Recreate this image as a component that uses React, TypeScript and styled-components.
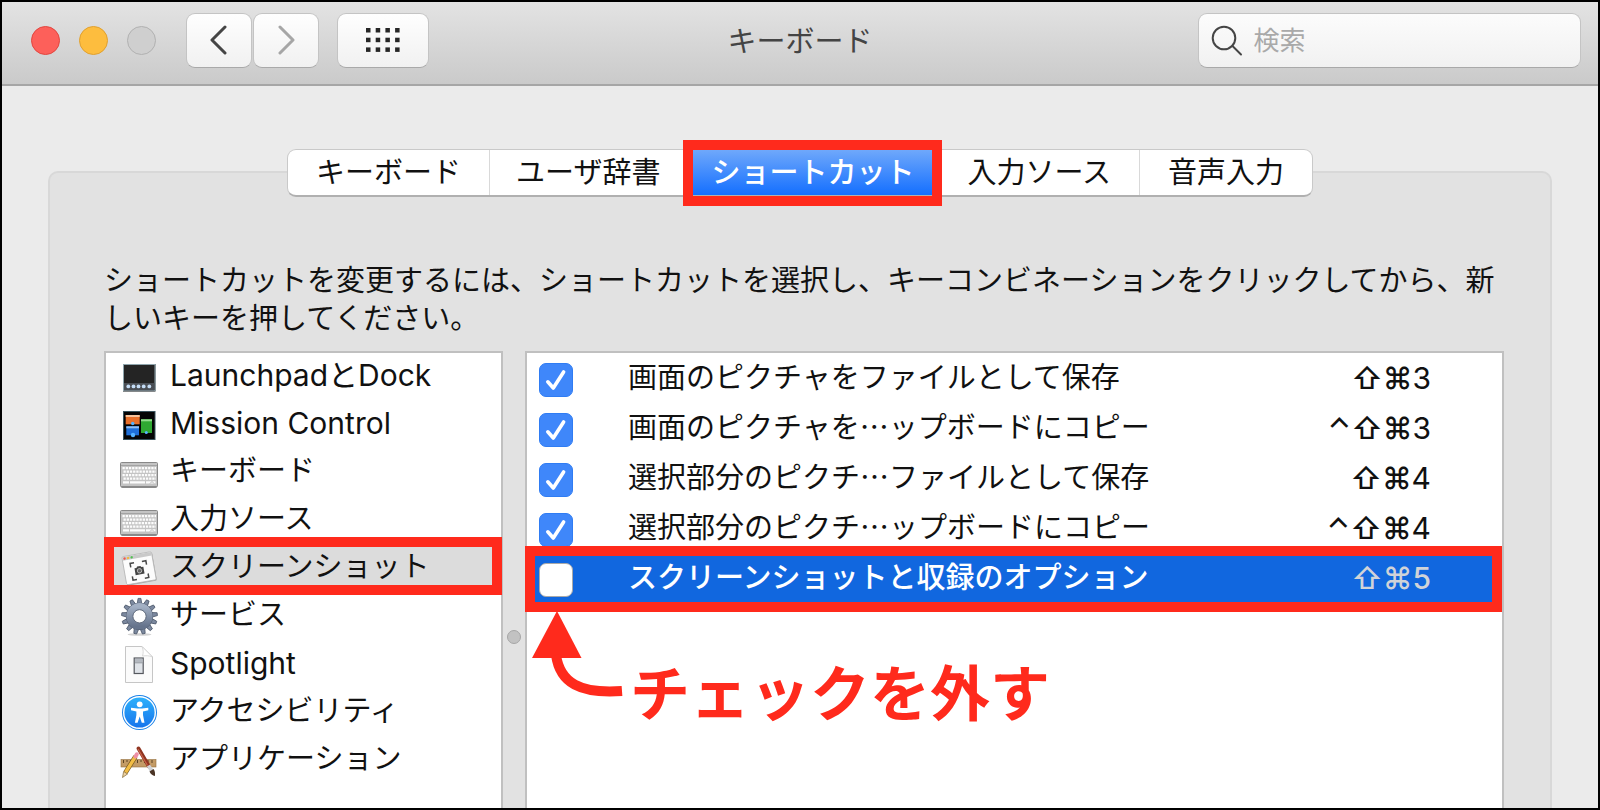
import React, { useState } from "react";
import styled, { createGlobalStyle, css } from "styled-components";

const RED = "#ff2a1c";
const JP = '"Noto Sans CJK JP"';

const GlobalStyle = createGlobalStyle`
  *, *::before, *::after { box-sizing: border-box; }
  body { margin: 0; background: #ebebeb; }
  button, input { font: inherit; color: inherit; margin: 0; }
  ul { list-style: none; margin: 0; padding: 0; }
`;

const Window = styled.div`
  display: flex;
  flex-direction: column;
  height: 100vh;
  border: 2px solid #000;
  background: #ebebeb;
  overflow: hidden;
  color: #111;
  font-family: Inter, ${JP}, sans-serif;
  font-size: 29px;
  line-height: 38px;
`;

const TitleBar = styled.header`
  display: grid;
  grid-template-columns: 1fr auto 1fr;
  align-items: center;
  flex: none;
  height: 84px;
  padding: 0 17px 6px;
  background: linear-gradient(#e3e3e3, #cacaca);
  border-bottom: 2px solid #a6a6a6;
`;

const Controls = styled.div`
  display: flex;
  align-items: center;
  padding-left: 12px;
`;

const Lights = styled.div`
  display: flex;
  gap: 19px;
  margin-right: 29px;
`;

const Light = styled.button<{ $fill: string; $ring: string }>`
  width: 29px;
  height: 29px;
  padding: 0;
  border: 1px solid ${(p) => p.$ring};
  border-radius: 50%;
  background: ${(p) => p.$fill};
`;

const ToolButton = styled.button<{ $wide?: boolean }>`
  display: flex;
  align-items: center;
  justify-content: center;
  width: ${(p) => (p.$wide ? "92px" : "66px")};
  height: 55px;
  margin-left: ${(p) => (p.$wide ? "18px" : "1px")};
  padding: 0;
  border: 1px solid #c4c4c4;
  border-bottom-color: #a9a9a9;
  border-radius: 9px;
  background: linear-gradient(#fefefe, #f1f1f1);
`;

const Title = styled.h1`
  margin: 0;
  padding-top: 4px;
  font-size: 29px;
  font-weight: 400;
  color: #444;
`;

const Search = styled.label`
  justify-self: end;
  display: flex;
  align-items: center;
  gap: 10px;
  width: 54%;
  height: 55px;
  padding: 0 12px;
  border: 1px solid #c4c4c4;
  border-bottom-color: #a9a9a9;
  border-radius: 9px;
  background: linear-gradient(#fcfcfc, #f1f1f1);

  svg { flex: none; }
`;

const SearchInput = styled.input`
  flex: 1;
  min-width: 0;
  padding: 2px 0 0;
  border: 0;
  outline: 0;
  background: none;
  font-size: 26px;

  &::placeholder { color: #a9a9a9; opacity: 1; }
`;

const Body = styled.main`
  display: flex;
  flex-direction: column;
  flex: 1;
  min-height: 0;
  padding: 63px 46px 0;
`;

const Tabs = styled.div`
  position: relative;
  z-index: 1;
  display: flex;
  align-self: center;
  height: 48px;
  margin-bottom: -26px;
  border: 1px solid #c9c9c9;
  border-bottom: 2px solid #b0b0b0;
  border-radius: 9px;
  background: #fff;
`;

const Tab = styled.button<{ $active: boolean }>`
  position: relative;
  padding: 0 28px;
  border: 0;
  background: none;
  white-space: nowrap;

  & + & { border-left: 1px solid #d9d9d9; }
  &:nth-child(2) { padding: 0 27px 0 26px; }

  ${(p) =>
    p.$active &&
    css`
      && { padding: 0 24px; border: 0; }
      z-index: 1;
      background: linear-gradient(#6fa8fb, #146fff);
      color: #fff;
      font-weight: 500;
      &::after {
        content: "";
        position: absolute;
        inset: -10px -4px -11px;
        border: 10px solid ${RED};
      }
    `}
`;

const Panel = styled.section`
  display: flex;
  flex-direction: column;
  flex: 1;
  min-height: 0;
  padding: 86px 46px 0 54px;
  border: 2px solid #d8d8d8;
  border-bottom: 0;
  border-radius: 10px 10px 0 0;
  background: #e2e2e2;
`;

const Hint = styled.p`
  margin: 0 -20px 16px 0;
  padding-right: 20px;
  font-family: ${JP}, sans-serif;
`;

const Panes = styled.div`
  display: grid;
  grid-template-columns: 399fr 22px 979fr;
  flex: 1;
  min-height: 0;
`;

const Pane = styled.div`
  min-width: 0;
  border: 2px solid #c0c0c0;
  border-bottom: 0;
  background: #fff;
`;

const Divider = styled.div`
  display: flex;
  justify-content: center;
  padding-top: 279px;

  &::before {
    content: "";
    width: 14px;
    height: 14px;
    border: 1px solid #a6a6a6;
    border-radius: 50%;
    background: #c2c2c2;
  }
`;

const marked = css`
  position: relative;
  &::after {
    content: "";
    position: absolute;
    border: 10px solid ${RED};
    pointer-events: none;
  }
`;

const CategoryItem = styled.li<{ $active: boolean }>`
  ${(p) =>
    p.$active &&
    css`
      ${marked}
      background: #dcdcdc;
      &::after { inset: -8px -1px -2px -2px; }
    `}
`;

const CategoryButton = styled.button`
  display: flex;
  align-items: center;
  gap: 11px;
  width: 100%;
  height: 48px;
  padding: 0 0 0 13px;
  border: 0;
  background: none;
  text-align: left;
  white-space: nowrap;

  svg { flex: none; }
`;

const CategoryName = styled.span<{ $latin: boolean }>`
  padding-bottom: 4px;
  font-size: ${(p) => (p.$latin ? "30px" : "29px")};
`;

const ShortcutItem = styled.li<{ $active: boolean }>`
  display: flex;
  align-items: center;
  height: 50px;
  padding: 0 71px 0 12px;

  ${(p) =>
    p.$active &&
    css`
      ${marked}
      background: #1167df;
      color: #fff;
      font-weight: 500;
      &::after { inset: -7px 0 -9px -2px; }
    `}
`;

const CheckCell = styled.span`
  display: grid;
  flex: none;
  margin: 4px 55px 0 0;

  > * { grid-area: 1 / 1; }
  svg { pointer-events: none; }
`;

const CheckBox = styled.input`
  appearance: none;
  width: 34px;
  height: 34px;
  border: 1px solid #a9a9a9;
  border-radius: 7px;
  background: #fff;

  &:checked { border-color: #2f7cf3; background: #3f87fa; }
  &:not(:checked) + svg { visibility: hidden; }
`;

const ShortcutName = styled.label`
  flex: 1;
  padding-bottom: 6px;
  font-family: ${JP}, sans-serif;
  white-space: nowrap;
`;

const Keys = styled.kbd<{ $dim: boolean }>`
  font-family: Inter, "DejaVu Sans", sans-serif;
  font-size: 30px;
  font-weight: ${(p) => (p.$dim ? 500 : 400)};
  color: ${(p) => (p.$dim ? "#d0d3d8" : "inherit")};
`;

const Modifiers = styled.span`
  font-weight: 500;
`;

const Callout = styled.div`
  display: flex;
  align-items: flex-start;
  padding-left: 5px;
  color: ${RED};
`;

const CalloutText = styled.strong`
  margin: 51px 0 0 6px;
  font-family: ${JP}, sans-serif;
  font-size: 60px;
  font-weight: 700;
  line-height: 72px;
  white-space: nowrap;
`;

const Icon = ({ children }: { children: React.ReactNode }) => (
  <svg width="40" height="40" viewBox="0 0 40 40" aria-hidden="true">
    {children}
  </svg>
);

const LaunchpadIcon = () => (
  <Icon>
    <rect x="4" y="7" width="32.500" height="27.500" fill="#0c1417" />
    <rect x="4.500" y="7.500" width="31.500" height="26" fill="#242424" stroke="#8fa5ad" strokeWidth="1" />
    <rect x="5" y="26" width="30.500" height="7.500" fill="#4a4e54" />
    {[9.3, 14.5, 19.5, 24.7, 30.3].map((x) => (
      <circle key={x} cx={x} cy="29.400" r="1.900" fill="#c4dcf5" />
    ))}
  </Icon>
);

const MissionIcon = () => (
  <Icon>
    <rect x="4.500" y="6.500" width="31.500" height="28" fill="#050505" stroke="#39535c" />
    <rect x="6.700" y="10" width="14" height="9.300" fill="#e8702a" />
    <rect x="6.700" y="10" width="14" height="2" fill="#f6c49c" />
    <rect x="7.300" y="21.300" width="12.700" height="9" fill="#1f6fd8" />
    <rect x="7.300" y="21.300" width="12.700" height="2" fill="#8fc0f5" />
    <rect x="22" y="14.300" width="11" height="13.700" fill="#2fa832" />
    <rect x="22" y="14.300" width="11" height="2" fill="#92dd8c" />
    <circle cx="13.700" cy="18.500" r="1.700" fill="#56b4ff" />
    <circle cx="14" cy="30" r="2.200" fill="#56b4ff" />
    <circle cx="27.300" cy="27.500" r="1.500" fill="#56b4ff" />
  </Icon>
);

const KeyboardIcon = () => (
  <Icon>
    <rect x="1.500" y="11" width="37" height="24" rx="2" fill="#8a8a8a" />
    <rect x="1.500" y="9.500" width="37" height="24" rx="1" fill="#c4c4c4" stroke="#888" />
    <path d="M2 12.500H38" stroke="#a3a3a3" />
    {[15.2, 18.7, 22.2, 25.7].map((y, i) => (
      <path
        key={y}
        d={`M${3.5 + (i % 2)} ${y}H37`}
        stroke="#fcfcfc"
        strokeWidth="2.300"
        strokeDasharray="2.300 .9"
      />
    ))}
    <path d="M4 29.300H10M11 29.300H26M27 29.300H36.500" stroke="#fcfcfc" strokeWidth="2.300" />
    <path d="M31 30.500L33 28.500L35 30.500" fill="none" stroke="#a3a3a3" strokeWidth=".8" />
  </Icon>
);

const ScreenshotIcon = () => (
  <Icon>
    <g transform="rotate(-10 20 19)">
      <rect x="5.500" y="6" width="30" height="28.500" rx="1.500" fill="#a6a6a6" />
      <rect x="5" y="5" width="30" height="28.500" rx="1.500" fill="#fcfcfc" stroke="#b4b4b4" strokeWidth=".8" />
      <path d="M5.400 5.400H34.600V9H5.400Z" fill="#c9c9c9" />
      <circle cx="7.400" cy="7.200" r="1.200" fill="#f2564d" />
      <circle cx="11" cy="7.200" r="1.200" fill="#f4b73c" />
      <circle cx="14.600" cy="7.200" r="1.200" fill="#4fc14f" />
      <path
        d="M12 17V13H16M24 13H28V17M28 26V30H24M16 30H12V26"
        fill="none"
        stroke="#484848"
        strokeWidth="1.500"
      />
      <path d="M15.500 18.500H17.500L18.300 17.300H21.700L22.500 18.500H24.500V25.500H15.500Z" fill="#444" />
      <circle cx="20" cy="21.800" r="2.200" fill="#666" stroke="#ccc" strokeWidth=".8" />
    </g>
  </Icon>
);

const GearIcon = () => (
  <Icon>
    <defs>
      <linearGradient id="gear" x1="0" y1="0" x2="0" y2="1">
        <stop offset="0" stopColor="#a3b0c4" />
        <stop offset="1" stopColor="#66748c" />
      </linearGradient>
    </defs>
    <ellipse cx="20.500" cy="37.500" rx="12" ry="1.300" fill="#d3d3d3" />
    <g fill="#7c899f" stroke="#4d586b" strokeWidth=".8">
      {Array.from({ length: 13 }, (_, i) => (
        <path
          key={i}
          transform={`rotate(${(i * 360) / 13} 20.500 19.300)`}
          d="M18 8L19.100 1.400H21.900L23 8Z"
        />
      ))}
    </g>
    <circle cx="20.500" cy="19.300" r="9.800" fill="none" stroke="#4d586b" strokeWidth="7.600" />
    <circle cx="20.500" cy="19.300" r="9.800" fill="none" stroke="url(#gear)" strokeWidth="6.800" />
    <circle cx="20.500" cy="19.300" r="6.600" fill="#fff" stroke="#4d586b" strokeWidth=".8" />
  </Icon>
);

const SpotlightIcon = () => (
  <Icon>
    <path d="M6.500 1.500H23L33.500 12V37.500H6.500Z" fill="#fbfbfb" stroke="#c6c6c6" />
    <path d="M23 1.500C24.500 5 24.500 8 23.500 11C27 10.500 30 10.500 33.500 12Z" fill="#fff" stroke="#d0d0d0" strokeWidth=".8" />
    <rect x="15.200" y="13" width="9" height="15.500" fill="#dfe3e8" stroke="#55585e" strokeWidth="1.200" />
    <path d="M16 15.500H23.500" stroke="#b4b9c0" strokeWidth="3.500" />
    <path d="M16 17.800H23.500" stroke="#80858d" strokeWidth=".8" />
  </Icon>
);

const AccessibilityIcon = () => (
  <Icon>
    <defs>
      <linearGradient id="access" x1="0" y1="0" x2="0" y2="1">
        <stop offset="0" stopColor="#2eb2fb" />
        <stop offset="1" stopColor="#1673ec" />
      </linearGradient>
    </defs>
    <circle cx="20.500" cy="19.500" r="17.500" fill="#1d83e8" />
    <circle cx="20.500" cy="19.500" r="15.800" fill="url(#access)" stroke="#fff" strokeWidth="1.400" />
    <circle cx="20.700" cy="11.300" r="2.900" fill="#fff" />
    <path
      d="M12 14.800L18.500 15.500H23L29.300 14.800V17.300L24 18.500V22L25.500 29.800H22.800L20.700 23.500L18.600 29.800H15.900L17.400 22V18.500L12 17.300Z"
      fill="#fff"
    />
  </Icon>
);

const ApplicationsIcon = () => (
  <Icon>
    <rect x="2" y="18.500" width="35" height="7.500" fill="#c39b66" stroke="#94703f" strokeWidth=".6" />
    <path d="M4.500 19V22M8 19V21M11.500 19V22M15 19V21M18.500 19V22M22 19V21M25.500 19V22M29 19V21M33 19V22" stroke="#5b4324" />
    <path d="M19.500 7.500L30 25.500" stroke="#8f3420" strokeWidth="3.800" strokeLinecap="round" />
    <path d="M19 8L28.500 24.500" stroke="#c9644c" strokeWidth="1.200" />
    <path d="M29.500 24.500L32.500 29.500" stroke="#d0d3d6" strokeWidth="3.800" />
    <path d="M30.500 30.500L34.500 28C36.500 30.500 36 34 36 35C33.500 34.500 31.500 33 30.500 30.500Z" fill="#4a3425" />
    <path d="M16.500 15.500L6.500 31.500" stroke="#6d5118" strokeWidth="4.600" />
    <path d="M16.500 15.500L6.500 31.500" stroke="#f3bd45" strokeWidth="3.400" />
    <path d="M17.800 13.300L16.500 15.500" stroke="#ee8fa5" strokeWidth="4" strokeLinecap="round" />
    <path d="M4.600 30.500L8.500 33L3.500 36.500Z" fill="#eed3a4" stroke="#6d5118" strokeWidth=".6" />
  </Icon>
);

const tabs = ["キーボード", "ユーザ辞書", "ショートカット", "入力ソース", "音声入力"];

const categories = [
  { name: "LaunchpadとDock", icon: <LaunchpadIcon />, latin: true },
  { name: "Mission Control", icon: <MissionIcon />, latin: true },
  { name: "キーボード", icon: <KeyboardIcon /> },
  { name: "入力ソース", icon: <KeyboardIcon /> },
  { name: "スクリーンショット", icon: <ScreenshotIcon /> },
  { name: "サービス", icon: <GearIcon /> },
  { name: "Spotlight", icon: <SpotlightIcon />, latin: true },
  { name: "アクセシビリティ", icon: <AccessibilityIcon /> },
  { name: "アプリケーション", icon: <ApplicationsIcon /> },
];

const shortcuts = [
  { name: "画面のピクチャをファイルとして保存", modifiers: "⇧⌘", digit: "3", on: true },
  { name: "画面のピクチャを…ップボードにコピー", modifiers: "⌃⇧⌘", digit: "3", on: true },
  { name: "選択部分のピクチ…ファイルとして保存", modifiers: "⇧⌘", digit: "4", on: true },
  { name: "選択部分のピクチ…ップボードにコピー", modifiers: "⌃⇧⌘", digit: "4", on: true },
  { name: "スクリーンショットと収録のオプション", modifiers: "⇧⌘", digit: "5", on: false },
];

export default function App() {
  const [tab, setTab] = useState(2);
  const [category, setCategory] = useState(4);
  const [enabled, setEnabled] = useState(shortcuts.map((s) => s.on));
  const selected = 4;

  return (
    <>
      <GlobalStyle />
      <Window lang="ja">
        <TitleBar>
          <Controls>
            <Lights>
              <Light $fill="#fd605a" $ring="#e2463f" aria-label="閉じる" />
              <Light $fill="#fdbd3e" $ring="#e0a02f" aria-label="しまう" />
              <Light $fill="#cfcfcf" $ring="#b1b1b1" aria-label="拡大" disabled />
            </Lights>
            <ToolButton aria-label="戻る">
              <svg width="20" height="30" viewBox="0 0 20 30" fill="none" stroke="#454545" strokeWidth="3" strokeLinecap="round" strokeLinejoin="round">
                <path d="M16 2L3 15L16 28" />
              </svg>
            </ToolButton>
            <ToolButton aria-label="進む">
              <svg width="20" height="30" viewBox="0 0 20 30" fill="none" stroke="#a6a6a6" strokeWidth="3" strokeLinecap="round" strokeLinejoin="round">
                <path d="M4 2L17 15L4 28" />
              </svg>
            </ToolButton>
            <ToolButton $wide aria-label="すべてを表示">
              <svg width="34" height="24" viewBox="0 0 34 24" fill="#262626">
                {[0, 1, 2].map((r) =>
                  [0, 1, 2, 3].map((c) => (
                    <rect key={`${r}${c}`} x={c * 9.7} y={r * 9.7} width="4.500" height="4.500" />
                  )),
                )}
              </svg>
            </ToolButton>
          </Controls>
          <Title>キーボード</Title>
          <Search>
            <svg width="32" height="32" viewBox="0 0 32 32" fill="none" stroke="#454545" strokeWidth="2" strokeLinecap="round">
              <circle cx="13" cy="14" r="11.300" />
              <path d="M21.500 22L30 30.500" />
            </svg>
            <SearchInput type="search" placeholder="検索" aria-label="検索" />
          </Search>
        </TitleBar>
        <Body>
          <Tabs role="tablist">
            {tabs.map((name, i) => (
              <Tab key={name} role="tab" aria-selected={i === tab} $active={i === tab} onClick={() => setTab(i)}>
                {name}
              </Tab>
            ))}
          </Tabs>
          <Panel>
            <Hint>
              ショートカットを変更するには、ショートカットを選択し、キーコンビネーションをクリックしてから、新しいキーを押してください。
            </Hint>
            <Panes>
              <Pane>
                <ul>
                  {categories.map((c, i) => (
                    <CategoryItem key={c.name} $active={i === category}>
                      <CategoryButton onClick={() => setCategory(i)}>
                        {c.icon}
                        <CategoryName $latin={!!c.latin}>{c.name}</CategoryName>
                      </CategoryButton>
                    </CategoryItem>
                  ))}
                </ul>
              </Pane>
              <Divider />
              <Pane>
                <ul>
                  {shortcuts.map((s, i) => (
                    <ShortcutItem key={s.name} $active={i === selected}>
                      <CheckCell>
                        <CheckBox
                          id={`shortcut-${i}`}
                          type="checkbox"
                          checked={enabled[i]}
                          onChange={() => setEnabled(enabled.map((v, j) => (j === i ? !v : v)))}
                        />
                        <svg width="34" height="34" viewBox="0 0 34 34" fill="none" stroke="#fff" strokeWidth="3.600" strokeLinecap="round" strokeLinejoin="round">
                          <path d="M8.800 18.800L14.300 25L24.600 9" />
                        </svg>
                      </CheckCell>
                      <ShortcutName htmlFor={`shortcut-${i}`}>{s.name}</ShortcutName>
                      <Keys $dim={i === selected}>
                        <Modifiers>{s.modifiers}</Modifiers>
                        {s.digit}
                      </Keys>
                    </ShortcutItem>
                  ))}
                </ul>
                <Callout>
                  <svg width="92" height="96" viewBox="0 0 92 96" aria-hidden="true">
                    <path d="M25 8L49.500 55H0Z" fill={RED} />
                    <path d="M24 52C28 80 48 91 90 88" fill="none" stroke={RED} strokeWidth="10" />
                  </svg>
                  <CalloutText>チェックを外す</CalloutText>
                </Callout>
              </Pane>
            </Panes>
          </Panel>
        </Body>
      </Window>
    </>
  );
}
